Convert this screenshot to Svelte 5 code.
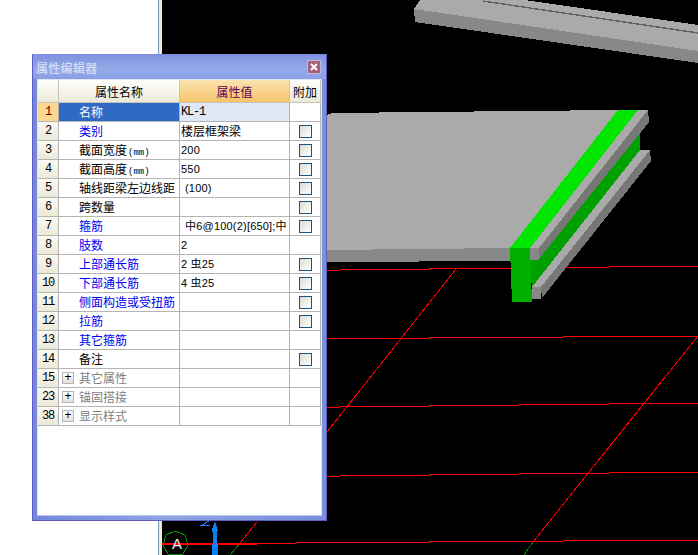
<script>
  const rows = [
    { no: 1, name: "名称", value: "KL-1", kind: "mono", selected: true },
    { no: 2, name: "类别", value: "楼层框架梁", blue: true, check: true },
    { no: 3, name: "截面宽度", unit: "(mm)", value: "200", kind: "num", check: true },
    { no: 4, name: "截面高度", unit: "(mm)", value: "550", kind: "num", check: true },
    { no: 5, name: "轴线距梁左边线距", value: "(100)", kind: "num", indent: true, check: true },
    { no: 6, name: "跨数量", value: "", check: true },
    { no: 7, name: "箍筋", value: "中6@100(2)[650];中", kind: "num", indent: true, blue: true, check: true },
    { no: 8, name: "肢数", value: "2", kind: "num", blue: true },
    { no: 9, name: "上部通长筋", value: "2 虫25", kind: "num", blue: true, check: true },
    { no: 10, name: "下部通长筋", value: "4 虫25", kind: "num", blue: true, check: true },
    { no: 11, name: "侧面构造或受扭筋", value: "", blue: true, check: true },
    { no: 12, name: "拉筋", value: "", blue: true, check: true },
    { no: 13, name: "其它箍筋", value: "", blue: true },
    { no: 14, name: "备注", value: "", check: true },
    { no: 15, name: "其它属性", value: "", group: true },
    { no: 23, name: "锚固搭接", value: "", group: true },
    { no: 38, name: "显示样式", value: "", group: true }
  ];

  // grid lines on the floor, each one steps up slightly to the right
  const redLines = [
    "M162 272 L698 266",
    "M162 340 L698 336",
    "M162 409 L698 403",
    "M162 478 L698 472",
    "M162 544 L698 540",
    "M456 269 L327 432",
    "M698 336 L533 542",
    "M257 522 L240 543"
  ];
</script>

<div class="page">
  <div class="side"></div>
  <div class="divider"></div>
  <svg class="scene" viewBox="162 0 536 555" shape-rendering="crispEdges">
    <rect x="162" y="0" width="536" height="555" fill="#000" />

    {#each redLines as d}
      <path {d} stroke="#f00" stroke-width="1" fill="none" />
    {/each}
    <path d="M533 542 L524 555 M240 543 L230 555" stroke="#0a7a0a" fill="none" />

    <!-- beam in the back -->
    <polygon points="414,9 420,0 525,0 698,25 698,51" fill="#aaa" />
    <polygon points="414,9 698,51 698,63 415,22" fill="#888" />
    <path d="M483 1 L698 33" stroke="#606060" stroke-width="1.4" fill="none" />

    <!-- slab -->
    <polygon points="327,115 332,113 618,110 510,248 327,250" fill="#aaa" />
    <polygon points="327,250 510,248 510,261 327,262" fill="#888" />

    <!-- beam -->
    <polygon points="530,260 640,125 640,152 532,290" fill="#00a000" />
    <polygon points="618,110 638,110 530,248 510,248" fill="#00e600" />
    <polygon points="510,248 530,248 532,302 512,302" fill="#00b000" />
    <polygon points="638,110 648,110 539,248 530,248" fill="#aaa" />
    <polygon points="648,110 649,122 539,259 539,248" fill="#777" />
    <rect x="530" y="248" width="9" height="12" fill="#888" />
    <polygon points="640,150 650,150 541,287 532,287" fill="#aaa" />
    <polygon points="650,150 651,161 542,298 541,287" fill="#777" />
    <rect x="532" y="287" width="9" height="12" fill="#888" />

    <!-- axis marker -->
    <path d="M175 531 L185 535 L188 545 L183 554 L168 554 L163 545 L166 535 Z" stroke="#0a8a0a" fill="none" />
    <path d="M162 544 L257 544" stroke="#f00" />
    <text x="177" y="549" class="axis">A</text>
    <path d="M209 521 L202 525 L210 525" stroke="#2080ff" fill="none" />
    <polygon points="215,521 218,530 217,533 218,555 212,555 213,533 212,530" fill="#0a80f0" />
  </svg>

  <div class="dialog">
    <div class="titlebar">
      <span class="title">属性编辑器</span>
      <span class="close">
        <svg width="8" height="8" viewBox="0 0 8 8"><path d="M1 1 L7 7 M7 1 L1 7" stroke="#fff" stroke-width="2" /></svg>
      </span>
    </div>
    <div class="body">
      <table>
        <colgroup>
          <col class="c-no" /><col class="c-name" /><col class="c-value" /><col class="c-add" />
        </colgroup>
        <thead>
          <tr>
            <th></th>
            <th>属性名称</th>
            <th class="active">属性值</th>
            <th>附加</th>
          </tr>
        </thead>
        <tbody>
          {#each rows as row}
            <tr class:group={row.group}>
              <td class="no" class:current={row.selected}><div class="cell">{row.no}</div></td>
              <td class="name" class:blue={row.blue} class:selected={row.selected}>
                <div class="cell">{#if row.group}<span class="plus">+</span>{/if}{row.name}{#if row.unit}<span class="unit">{row.unit}</span>{/if}</div>
              </td>
              <td class="value {row.kind || ''}" class:indent={row.indent} class:tinted={row.selected}>
                <div class="cell">{row.value}</div>
              </td>
              <td class="add"><div class="cell">{#if row.check}<span class="box"></span>{/if}</div></td>
            </tr>
          {/each}
        </tbody>
      </table>
    </div>
  </div>
</div>

<style>
  :global(body) {
    background: #fff;
  }

  .page {
    position: relative;
    display: flex;
    width: 698px;
    height: 555px;
    overflow: hidden;
    font-family: "Noto Sans CJK SC", "Liberation Sans", sans-serif;
    font-size: 12px;
  }

  .side {
    flex: 0 0 158px;
    background: #fff;
  }

  .divider {
    flex: 0 0 4px;
    box-sizing: border-box;
    border-left: 1px solid #7f9db9;
    background: #ece9d8;
  }

  .scene {
    flex: 1;
    display: block;
    height: 555px;
  }

  .axis {
    font-family: "Liberation Sans", sans-serif;
    font-size: 15px;
    fill: #eee;
    text-anchor: middle;
  }

  .dialog {
    position: absolute;
    left: 32px;
    top: 54px;
    width: 295px;
    height: 467px;
    box-sizing: border-box;
    display: flex;
    flex-direction: column;
    border: 1px solid #5c5cc4;
    border-top-color: #7a8ad8;
    background: linear-gradient(90deg, #7488dc, #8ea4e4 45%, #7a8fdc);
  }

  .titlebar {
    flex: 0 0 24px;
    display: flex;
    align-items: center;
    justify-content: space-between;
    padding: 0 5px 0 3px;
    background: linear-gradient(#8093e0, #93a9e8 60%, #8aa0e4);
  }

  .title {
    color: #d4dff5;
    font-weight: 500;
    letter-spacing: 0.3px;
  }

  .close {
    display: flex;
    align-items: center;
    justify-content: center;
    width: 14px;
    height: 14px;
    box-sizing: border-box;
    border: 1px solid #c0b8d8;
    background: #a8607c;
  }

  .body {
    flex: 1;
    margin: 0 4px 4px;
    background: #fff;
    border-left: 1px solid #dfe6f6;
    border-top: 1px solid #dfe6f6;
    border-right: 1px solid #dfe6f6;
    border-bottom: 1px solid #b8c6ee;
  }

  table {
    width: 283px;
    table-layout: fixed;
    border-collapse: separate;
    border-spacing: 0;
    color: #000;
  }

  .c-no { width: 21px; }
  .c-name { width: 121px; }
  .c-value { width: 110px; }
  .c-add { width: 31px; }

  th {
    height: 22px;
    padding: 0;
    font-weight: 400;
    text-align: center;
    white-space: nowrap;
    background: linear-gradient(#fffffb, #ece9d8);
    border-right: 1px solid #c8c6ba;
    border-bottom: 1px solid #c8c6ba;
  }

  th.active {
    color: #600050;
    background: linear-gradient(#fbe3b2, #f6c468);
  }

  td {
    height: 18px;
    padding: 0;
    border-right: 1px solid #b4b4b4;
    border-bottom: 1px solid #b4b4b4;
    white-space: nowrap;
  }

  /* fixed box so mixed fonts can't stretch a row */
  .cell {
    position: relative;
    height: 18px;
    line-height: 18px;
    overflow: hidden;
  }

  .no {
    text-align: center;
    font-family: "Liberation Mono", monospace;
    font-size: 12px;
    letter-spacing: -1.2px;
    background: linear-gradient(#fbfaf4, #ece9d8);
  }

  .no.current {
    background: #ffd690;
    color: #500000;
  }

  .name .cell {
    padding-left: 20px;
  }

  .name.blue {
    color: #0000f0;
  }

  .name.selected {
    background: #316ac5;
    color: #fff;
  }

  .group .name {
    color: #808080;
  }

  .unit {
    margin-left: 1px;
    font-family: "Liberation Mono", monospace;
    font-size: 9px;
  }

  .plus {
    position: absolute;
    left: 3px;
    top: 3px;
    width: 12px;
    height: 12px;
    box-sizing: border-box;
    border: 1px solid #b4b4b4;
    background: linear-gradient(#fff, #e4e2d8);
    color: #000;
    font-family: "Liberation Sans", sans-serif;
    font-size: 12px;
    line-height: 9px;
    text-align: center;
  }

  .value .cell {
    padding-left: 1px;
  }

  .value.mono {
    font-family: "Liberation Mono", monospace;
    letter-spacing: -1.2px;
  }

  .value.num {
    font-family: "Liberation Sans", "Noto Sans CJK SC", sans-serif;
    font-size: 11px;
    letter-spacing: 0.2px;
  }

  .value.indent .cell {
    padding-left: 5px;
  }

  .value.tinted {
    background: #e0e8f5;
  }

  .box {
    display: block;
    width: 13px;
    height: 13px;
    margin: 3px auto 0;
    box-sizing: border-box;
    border: 1px solid #1c5180;
    background: linear-gradient(135deg, #dcdcd4, #fff);
  }
</style>
